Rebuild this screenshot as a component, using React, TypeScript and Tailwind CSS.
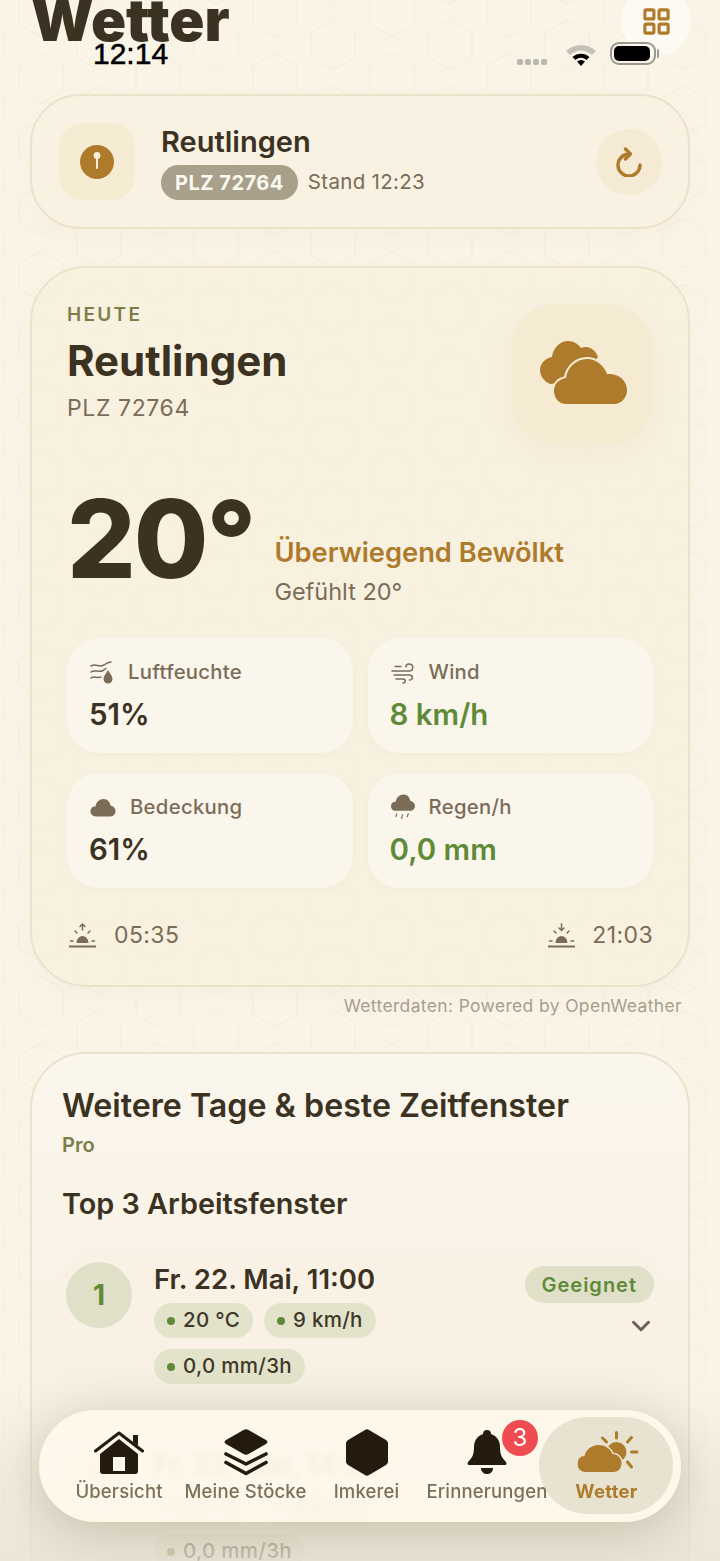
import { ChevronDown, LayoutGrid } from 'lucide-react';
import type { ReactNode } from 'react';

const font = "font-['Inter','Noto_Sans',sans-serif]";

// Honeycomb drawn behind everything
function HexBackground() {
  return (
    <svg className="absolute inset-0 h-full w-full" aria-hidden="true">
      <defs>
        <pattern id="hex" width="117" height="66" patternUnits="userSpaceOnUse" x="70" y="12">
          <g fill="none" stroke="#a88232" strokeOpacity="0.055" strokeWidth="1.2">
            <path d="M29 8 L51 20.500 V45.500 L29 58 L7 45.500 V20.500 Z" />
            <path d="M88 -25 L110 -12.500 V12.500 L88 25 L66 12.500 V-12.500 Z" />
            <path d="M88 41 L110 53.500 V78.500 L88 91 L66 78.500 V53.500 Z" />
          </g>
        </pattern>
      </defs>
      <rect width="100%" height="100%" fill="url(#hex)" />
    </svg>
  );
}

function StatusBar() {
  return (
    <div className="absolute left-0 top-0 z-30 h-[80px] w-full">
      <span className="absolute left-[93px] top-[38px] text-[30px] leading-[32px] text-black [-webkit-text-stroke:0.5px_black] font-['Liberation_Sans',sans-serif]">12:14</span>
      <div className="absolute left-[517px] top-[59px] flex gap-[2px]">
        <span className="h-[6px] w-[6px] rounded-[2px] bg-[#b9b6ae]" />
        <span className="h-[6px] w-[6px] rounded-[2px] bg-[#b9b6ae]" />
        <span className="h-[6px] w-[6px] rounded-[2px] bg-[#b9b6ae]" />
        <span className="h-[6px] w-[6px] rounded-[2px] bg-[#b9b6ae]" />
      </div>
      <svg className="absolute left-[565px] top-[42px]" width="32" height="24" viewBox="0 0 32 24">
        <path d="M1 9 C9 1 23 1 31 9 L27 13 C20 7 12 7 5 13 Z" fill="#c4c1b8" />
        <path d="M7.500 15 C12 10.500 20 10.500 24.500 15 L21.500 18 C18 15 14 15 10.500 18 Z" fill="#000" />
        <path d="M12 19.500 C14.500 17.500 17.500 17.500 20 19.500 L16 24 Z" fill="#000" />
      </svg>
      <div className="absolute left-[610px] top-[42px] flex h-[23px] w-[46px] items-center rounded-[9px] border-2 border-[#9a9890] p-[2px]">
        <span className="h-full w-[36px] rounded-[5px] bg-black" />
      </div>
      <span className="absolute left-[657px] top-[49px] h-[9px] w-[2px] rounded-r-full bg-[#9a9890]" />
    </div>
  );
}

function Header() {
  return (
    <div className="relative h-[94px]">
      <h1 className="absolute left-[31px] top-[-15px] text-[58px] font-black leading-[70px] text-[#3b3222]">Wetter</h1>
      <div className="absolute left-[621px] top-[-14px] flex h-[70px] w-[70px] items-center justify-center rounded-full bg-[#fdfaf3]">
        <LayoutGrid size={31} strokeWidth={2.4} className="text-[#b07a2a]" />
      </div>
    </div>
  );
}

function PinIcon() {
  return (
    <svg width="34" height="34" viewBox="0 0 34 34">
      <circle cx="17" cy="17" r="17" fill="#ae7a2b" />
      <circle cx="17" cy="10.500" r="3.400" fill="#f8efd9" />
      <rect x="16" y="11" width="2" height="13" rx="1" fill="#f8efd9" />
    </svg>
  );
}

function RefreshIcon() {
  return (
    <svg width="26" height="30" viewBox="0 0 26 30" fill="none" stroke="#ae7a2b" strokeWidth="3.400" strokeLinecap="round" strokeLinejoin="round">
      <path d="M13 7 A11 11 0 1 0 24 18" />
      <path d="M9.500 2 L14.500 7 L9.500 12" />
    </svg>
  );
}

function LocationCard() {
  return (
    <div className="mx-[30px] flex h-[135px] items-center rounded-[50px] border-2 border-[#ece1c9] bg-[#f8f0df]/85 pl-[27px] pr-[26px] shadow-[0_8px_24px_rgba(120,90,30,0.03)]">
      <div className="flex h-[77px] w-[76px] items-center justify-center rounded-[24px] bg-[#f6ecd4]">
        <PinIcon />
      </div>
      <div className="ml-[26px] flex-1 pt-[2px]">
        <div className="text-[29px] font-semibold leading-[34px] text-[#3b3222]">Reutlingen</div>
        <div className="mt-[6px] flex items-center gap-[10px]">
          <span className="flex h-[35px] items-center rounded-full bg-[#a9a08c] px-[14px] text-[20px] font-bold tracking-[0.5px] text-[#fbf8f0]">PLZ 72764</span>
          <span className="text-[20.500px] tracking-[0.3px] text-[#7a6c57]">Stand 12:23</span>
        </div>
      </div>
      <div className="flex h-[66px] w-[66px] items-center justify-center rounded-full bg-[#f5ebd5]">
        <RefreshIcon />
      </div>
    </div>
  );
}

function StatCard({ icon, label, value, green }: { icon: ReactNode; label: string; value: string; green?: boolean }) {
  return (
    <div className="h-[115px] rounded-[32px] bg-[#fbf6ec] pl-[23px] pt-[19px] shadow-[0_2px_6px_rgba(120,90,30,0.03)]">
      <div className="flex h-[30px] items-center gap-[14px] text-[20.300px] font-medium tracking-[0.3px] text-[#7a6c57]">
        {icon}
        <span>{label}</span>
      </div>
      <div className={`ml-[-1px] mt-[7px] text-[29.500px] font-semibold leading-[40px] ${green ? 'text-[#5f8a37]' : 'text-[#3b3222]'}`}>{value}</div>
    </div>
  );
}

const HumidityIcon = (
  <svg width="24" height="25" viewBox="0 0 24 25" fill="none" stroke="#7a6c57" strokeWidth="1.500" strokeLinecap="round">
    <path d="M1 6 C6 3 9 8 14 5 C17 3 19 2 21 2" />
    <path d="M1 12 C5 9 9 13 13 10.500 C14 10 15 9 16 8.500" />
    <path d="M1 18 C4 15.500 7 18.500 11 17" />
    <path d="M18 10 C16 13.500 13.500 16 13.500 19 A4.500 4.500 0 0 0 22.500 19 C22.500 16 20 13.500 18 10 Z" fill="#7a6c57" stroke="none" />
  </svg>
);

const WindIcon = (
  <svg width="24" height="25" viewBox="0 0 24 25" fill="none" stroke="#7a6c57" strokeWidth="1.500" strokeLinecap="round">
    <path d="M4 6.500 H10" />
    <path d="M1 11 H18 C23 11 23 4 18 4 C16 4 15 5.500 15 7" />
    <path d="M3 15 H18 C22.500 15 22.500 20 18.500 20" />
    <path d="M5 19 H12 C15 19 15 23 12 23" />
  </svg>
);

const CloudIcon = (
  <svg width="26" height="19" viewBox="0 0 25 19" fill="#7a6c57">
    <path d="M6 18.500 C1.500 18.500 0 15.500 0 13 C0 10 2.500 8 5 8.500 C5.500 4 9 1 13 1 C17 1 19.500 4 20 7.500 C23 8 25 10.500 25 13 C25 15.500 23 18.500 20 18.500 Z" />
  </svg>
);

const RainIcon = (
  <svg width="24" height="27" viewBox="0 0 25 27" fill="#7a6c57">
    <path d="M5 17 C1.500 17 0 14.500 0 12 C0 9 2.500 7 5 7.500 C5.500 3 9 0 13 0 C17 0 19.500 3 20 6.500 C23 7 25 9.500 25 12 C25 14.500 23 17 20 17 Z" />
    <path d="M6 20 L5 23 M12 21 L11 25 M18 20 L17 23" stroke="#7a6c57" strokeWidth="1.200" strokeLinecap="round" fill="none" />
  </svg>
);

function SunIcon({ down }: { down?: boolean }) {
  return (
    <svg width="27" height="25" viewBox="0 0 27 25" fill="none" stroke="#7a6c57" strokeWidth="1.500" strokeLinecap="round">
      {down ? <path d="M13.500 1 V7 M11 5 L13.500 7.500 L16 5" /> : <path d="M13.500 7 V1 M11 3.500 L13.500 1 L16 3.500" />}
      <path d="M6 8 L8 10 M21 8 L19 10 M1.500 18 H4 M23 18 H25.500" />
      <path d="M7.500 20 A6 7 0 0 1 19.500 20 Z" fill="#7a6c57" stroke="none" />
      <path d="M0.500 23.500 H26.500" strokeWidth="2" />
    </svg>
  );
}

const BigCloudsIcon = (
  <svg width="88" height="64" viewBox="0 0 88 64" fill="#ae7a2b" className="translate-x-[1px] translate-y-[-2px]">
    <path d="M10 43 C4 40 0 35 0 29 C0 22 6 17 12 16 C13 7 20 0 28 0 C34 0 38 3 41 7 C48 4 55 8 58 16 L40 40 Z" />
    <path
      d="M26 63 C19 63 14 57 14 50 C14 43 19 38 26 37 C27 27 36 18 47 18 C57 18 64 25 67 33 C78 32 87 39 87 49 C87 57 81 63 74 63 Z"
      stroke="#f5ebd2"
      strokeWidth="4"
      paintOrder="stroke"
    />
  </svg>
);

function WeatherCard() {
  return (
    <div className="mx-[30px] mt-[37px] h-[721px] rounded-[56px] border-2 border-[#ece1c9] bg-[#f8f0df]/80 px-[35px] pt-[35px] shadow-[0_8px_24px_rgba(120,90,30,0.03)]">
      <div className="flex justify-between">
        <div>
          <div className="text-[19px] font-semibold leading-[24px] tracking-[2.300px] text-[#7d7d48]">HEUTE</div>
          <div className="mt-[9px] text-[42px] font-bold leading-[50px] text-[#3b3222]">Reutlingen</div>
          <div className="mt-[7px] text-[23px] leading-[30px] tracking-[0.6px] text-[#7a6c57]">PLZ 72764</div>
        </div>
        <div className="mt-[1px] flex h-[141px] w-[141px] items-center justify-center rounded-[44px] bg-[#f5ebd2] shadow-[0_10px_30px_rgba(175,125,40,0.06)]">
          {BigCloudsIcon}
        </div>
      </div>

      <div className="mt-[38px] flex items-end">
        <div className="pb-[10px] text-[108px] font-extrabold leading-[112px] tracking-[-2px] text-[#3b3222]">20°</div>
        <div className="mb-[-2px] ml-[20px]">
          <div className="text-[27.300px] font-semibold leading-[34px] text-[#ae7a2b]">Überwiegend Bewölkt</div>
          <div className="mt-[7px] text-[23.500px] leading-[30px] text-[#7a6c57]">Gefühlt 20°</div>
        </div>
      </div>

      <div className="mt-[33px] grid grid-cols-2 gap-x-[15px] gap-y-[20px]">
        <StatCard icon={HumidityIcon} label="Luftfeuchte" value="51%" />
        <StatCard icon={WindIcon} label="Wind" value="8 km/h" green />
        <StatCard icon={CloudIcon} label="Bedeckung" value="61%" />
        <StatCard icon={RainIcon} label="Regen/h" value="0,0 mm" green />
      </div>

      <div className="mt-[30px] flex items-center justify-between">
        <div className="ml-[2px] flex items-center gap-[18px] text-[23px] tracking-[0.4px] text-[#7a6c57]">
          <SunIcon />
          <span>05:35</span>
        </div>
        <div className="flex items-center gap-[17px] text-[23px] tracking-[0.4px] text-[#7a6c57]">
          <SunIcon down />
          <span>21:03</span>
        </div>
      </div>
    </div>
  );
}

function Chip({ children }: { children: ReactNode }) {
  return (
    <span className="flex h-[35px] items-center gap-[8px] rounded-full bg-[#e3e3cc] px-[13px] text-[20.500px] font-medium tracking-[0.3px] text-[#3f3828]">
      <span className="h-[8px] w-[8px] rounded-full bg-[#5f8a37]" />
      {children}
    </span>
  );
}

function WindowRow({ rank, time }: { rank: number; time: string }) {
  return (
    <div className="flex h-[185px] rounded-[36px] bg-[#f7f0e0]/30 px-[4px] pt-[15px]">
      <div className="flex h-[66px] w-[66px] shrink-0 items-center justify-center rounded-full bg-[#e0e0c9] text-[28px] font-bold text-[#5f8a37]">{rank}</div>
      <div className="ml-[22px] flex-1">
        <div className="text-[27.500px] font-semibold leading-[34px] text-[#3b3222]">{time}</div>
        <div className="mt-[7px] flex gap-[11px]">
          <Chip>20 °C</Chip>
          <Chip>9 km/h</Chip>
        </div>
        <div className="mt-[11px] flex">
          <Chip>0,0 mm/3h</Chip>
        </div>
      </div>
      <div className="flex flex-col items-end">
        <span className="mt-[4px] flex h-[37px] items-center rounded-full bg-[#e0e0c9] px-[17px] text-[20px] font-semibold tracking-[1px] text-[#5f8a37]">Geeignet</span>
        <ChevronDown size={30} strokeWidth={2.4} className="mr-[-2px] mt-[8px] text-[#6f624c]" />
      </div>
    </div>
  );
}

function ProCard() {
  return (
    <div className="mx-[30px] mt-[35px] h-[600px] rounded-t-[56px] border-2 border-[#ece1c9] bg-gradient-to-b from-[#fbf6ec] to-[#f5eedd] px-[30px] pt-[30px]">
      <h2 className="text-[32.200px] font-semibold leading-[44px] text-[#3b3222]">Weitere Tage &amp; beste Zeitfenster</h2>
      <div className="mt-[4px] text-[20px] font-semibold leading-[26px] text-[#7d7d48]">Pro</div>
      <h3 className="mt-[28px] text-[28.800px] font-semibold leading-[36px] text-[#3b3222]">Top 3 Arbeitsfenster</h3>
      <div className="mt-[25px]">
        <WindowRow rank={1} time="Fr. 22. Mai, 11:00" />
        <WindowRow rank={2} time="Fr. 22. Mai, 14:00" />
      </div>
    </div>
  );
}

const HomeIcon = (
  <svg width="50" height="43" viewBox="0 0 50 43" fill="#241b0d">
    <path d="M1.500 20 L25 2 L48.500 20" fill="none" stroke="#241b0d" strokeWidth="3" strokeLinecap="round" strokeLinejoin="round" />
    <path d="M39 4 H44 V15 L39 11 Z" />
    <path fillRule="evenodd" d="M25 8 L44 23 V40 C44 42 43 43 41 43 H9 C7 43 6 42 6 40 V23 Z M19 26 V40 H31 V26 Z" />
  </svg>
);

const StacksIcon = (
  <svg width="44" height="47" viewBox="0 0 44 47" fill="#241b0d">
    <path d="M19.500 1 C21 0 23 0 24.500 1 L42 11 C44 12 44 14 42 15 L24.500 25 C23 26 21 26 19.500 25 L2 15 C0 14 0 12 2 11 Z" />
    <path d="M2 25 L22 35 L42 25 M2 33.500 L22 44.500 L42 33.500" fill="none" stroke="#241b0d" strokeWidth="3.600" strokeLinecap="round" strokeLinejoin="round" />
  </svg>
);

const HexIcon = (
  <svg width="42" height="47" viewBox="0 0 42 47" fill="#241b0d">
    <path d="M19 1 C20 0 22 0 23 1 L40 11 C41 12 42 13 42 14 V33 C42 34 41 35 40 36 L23 46 C22 47 20 47 19 46 L2 36 C1 35 0 34 0 33 V14 C0 13 1 12 2 11 Z" />
  </svg>
);

const BellIcon = (
  <svg width="40" height="44" viewBox="0 0 40 44" fill="#241b0d">
    <path d="M20 0 C23 0 24 2 24 4 C30 6 33 11 33 17 C33 25 35 28 39 32 C40 34 39 35 38 35 H2 C1 35 0 34 1 32 C5 28 7 25 7 17 C7 11 10 6 16 4 C16 2 17 0 20 0 Z" />
    <path d="M14 38 H26 C26 42 23 44 20 44 C17 44 14 42 14 38 Z" />
  </svg>
);

const PartlySunnyIcon = (
  <svg width="61" height="42" viewBox="0 0 61 42" fill="#ae7a2b" className="translate-x-[1.500px]">
    <circle cx="39" cy="21" r="10" />
    <path d="M39 1.500 V7 M25 7 L29 11 M54 6.500 L50 11 M54 21 H59.500 M50 31 L54 36" stroke="#ae7a2b" strokeWidth="3" strokeLinecap="round" fill="none" />
    <path
      d="M8 41 C3 41 0 37 0 33 C0 28 3 25 7 25 C8 19 14 14 21 14 C28 14 33 18 35 23 C40 23 44 27 44 32 C44 37 41 41 36 41 Z"
      stroke="#e8e3d0"
      strokeWidth="3"
      paintOrder="stroke"
    />
  </svg>
);

function TabItem({ icon, label, active, badge, width }: { icon: ReactNode; label: string; active?: boolean; badge?: string; width: string }) {
  return (
    <div className={`relative flex shrink-0 flex-col items-center pt-[16px] ${width}`}>
      <div className="flex h-[50px] items-center justify-center">{icon}</div>
      <span className={`mt-[2px] whitespace-nowrap text-[18.500px] leading-[24px] ${active ? 'font-bold tracking-[0.3px] text-[#ae7a2b]' : 'font-medium tracking-[0.15px] text-[#7d7059]'}`}>{label}</span>
      {badge && (
        <span className="absolute left-[81px] top-[9px] flex h-[36px] w-[36px] items-center justify-center rounded-full bg-[#ee4c50] text-[24px] text-white">{badge}</span>
      )}
    </div>
  );
}

function TabBar() {
  return (
    <>
      <div className="absolute bottom-0 left-0 z-10 h-[180px] w-full bg-gradient-to-b from-transparent to-[#e9e3d5]/80" />
      <div className="absolute left-[39px] top-[1410px] z-20 flex h-[112px] w-[642px] rounded-full border border-[#fbf8e8] bg-[#fef9ec]/92 pl-[19px] shadow-[0_10px_50px_rgba(70,50,15,0.22)] backdrop-blur-[3px]">
        <div className="absolute left-[499px] top-[6px] h-[97px] w-[134px] rounded-full bg-[#e8e3d0]" />
        <TabItem width="w-[120px]" icon={HomeIcon} label="Übersicht" />
        <TabItem width="w-[133px]" icon={StacksIcon} label="Meine Stöcke" />
        <TabItem width="w-[109px]" icon={HexIcon} label="Imkerei" />
        <TabItem width="w-[132px]" icon={BellIcon} label="Erinnerungen" badge="3" />
        <TabItem width="w-[107px]" icon={PartlySunnyIcon} label="Wetter" active />
      </div>
    </>
  );
}

export default function App() {
  return (
    <div className={`relative h-[1561px] w-[720px] overflow-hidden bg-[#faf4e7] ${font}`}>
      <HexBackground />
      <StatusBar />
      <div className="relative">
        <Header />
        <LocationCard />
        <WeatherCard />
        <div className="mr-[38px] mt-[8px] text-right text-[17.400px] leading-[22px] tracking-[0.4px] text-[#a89e8b]">Wetterdaten: Powered by OpenWeather</div>
        <ProCard />
      </div>
      <TabBar />
    </div>
  );
}
